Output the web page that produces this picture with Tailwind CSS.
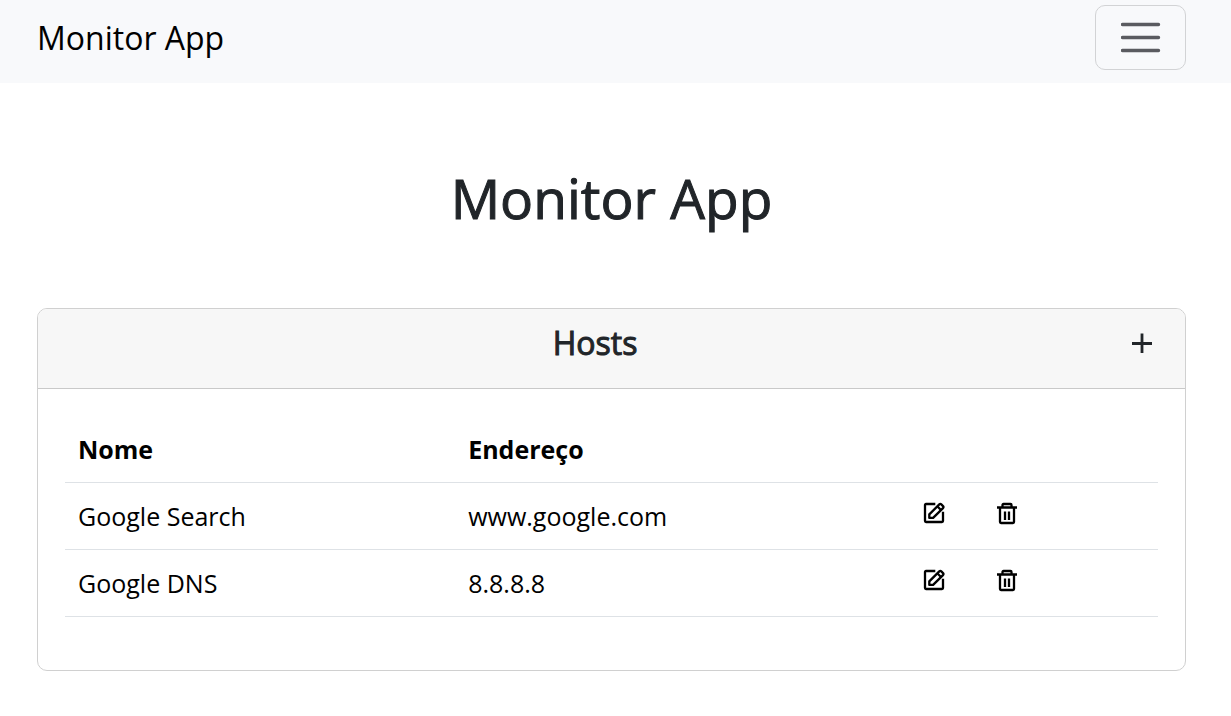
<!DOCTYPE html>
<html lang="pt-BR">
<head>
<meta charset="utf-8">
<meta name="viewport" content="width=device-width, initial-scale=1">
<title>Monitor App</title>
<script src="https://cdn.jsdelivr.net/npm/@tailwindcss/browser@4"></script>
</head>
<body class="bg-white font-['Segoe_UI','Open_Sans',sans-serif] text-[25px] leading-10 text-[#212529]">
<svg class="hidden" aria-hidden="true">
  <symbol id="edit" viewBox="0 0 22 22">
    <g fill="none" stroke="currentColor" stroke-width="2.3" stroke-linejoin="round">
      <path d="M12.3 2H3Q2 2 2 3V19Q2 20 3 20H19Q20 20 20 19V9.7"/>
      <path d="M6.3 15.9V12.4L16.3 2.4Q17.3 1.4 18.3 2.4L20 4.1Q21 5.1 20 6.1L10.1 15.9Z"/>
      <path d="M14.5 4.5L18 8"/>
    </g>
  </symbol>
  <symbol id="trash" viewBox="0 0 22 23">
    <g fill="none" stroke="currentColor" stroke-width="2.3">
      <path d="M1 5.5H21M6.5 5.5V3Q6.5 2 7.5 2H14.5Q15.5 2 15.5 3V5.5M4 5.5V20Q4 21 5 21H17Q18 21 18 20V5.5M9 9.5V18M13 9.5V18"/>
    </g>
  </symbol>
</svg>
<nav class="flex items-start justify-between bg-[#f8f9fb] pt-[5px] pr-[45px] pb-[13px] pl-[37px]">
  <a href="#" class="pt-2 text-[32px] leading-[50px] text-black">Monitor App</a>
  <button type="button" aria-label="Menu" class="flex h-[65px] w-[91px] items-center justify-center rounded-[10px] border border-[#d2d3d5]">
    <svg class="h-10 w-10" viewBox="0 0 40 40" fill="none" stroke="#5a5b60" stroke-width="3.4" stroke-linecap="round"><path d="M1.5 6.5H37.5M1.5 19.5H37.5M1.5 32.5H37.5"/></svg>
  </button>
</nav>
<main class="pr-[45px] pl-[37px]">
  <h1 class="pt-20 pb-[75px] text-center text-[55px] leading-[70px] font-medium [-webkit-text-stroke:1px_#212529]">Monitor App</h1>
  <section class="rounded-[10px] border border-[#d0d0d0]">
    <header class="flex items-start rounded-t-[9px] border-b border-[#c9c9c9] bg-[#f7f7f7] px-[27px] pt-[14px] pb-[25px]">
      <h2 class="flex-1 text-center text-[32px] leading-10 font-medium [-webkit-text-stroke:1px_#212529]">Hosts</h2>
      <button type="button" aria-label="Adicionar host" class="flex h-10 w-[33px] items-center justify-center">
        <svg class="h-5 w-5" viewBox="0 0 20 20" fill="none" stroke="currentColor" stroke-width="2.8"><path d="M0 10.5H20M10 0.5V20"/></svg>
      </button>
    </header>
    <div class="px-[27px] pt-[27px] pb-[53px]">
      <table class="w-full table-fixed border-collapse text-left text-black">
        <colgroup><col class="w-[35.7%]"><col class="w-[41.6%]"><col class="w-[6.7%]"><col></colgroup>
        <thead>
          <tr class="border-b border-[#dee2e6]">
            <th scope="col" class="p-[13px] font-bold">Nome</th>
            <th scope="col" class="p-[13px] font-bold">Endereço</th>
            <td></td><td></td>
          </tr>
        </thead>
        <tbody>
          <tr class="border-b border-[#dee2e6]">
            <td class="p-[13px]">Google Search</td>
            <td class="p-[13px]">www.google.com</td>
            <td class="pt-[19px] pl-[13px] align-top"><button type="button" aria-label="Editar Google Search" class="block"><svg class="h-[22px] w-[22px]"><use href="#edit"/></svg></button></td>
            <td class="pt-[19px] pl-[13px] align-top"><button type="button" aria-label="Excluir Google Search" class="block"><svg class="h-[23px] w-[22px]"><use href="#trash"/></svg></button></td>
          </tr>
          <tr class="border-b border-[#dee2e6]">
            <td class="p-[13px]">Google DNS</td>
            <td class="p-[13px]">8.8.8.8</td>
            <td class="pt-[19px] pl-[13px] align-top"><button type="button" aria-label="Editar Google DNS" class="block"><svg class="h-[22px] w-[22px]"><use href="#edit"/></svg></button></td>
            <td class="pt-[19px] pl-[13px] align-top"><button type="button" aria-label="Excluir Google DNS" class="block"><svg class="h-[23px] w-[22px]"><use href="#trash"/></svg></button></td>
          </tr>
        </tbody>
      </table>
    </div>
  </section>
</main>
</body>
</html>
